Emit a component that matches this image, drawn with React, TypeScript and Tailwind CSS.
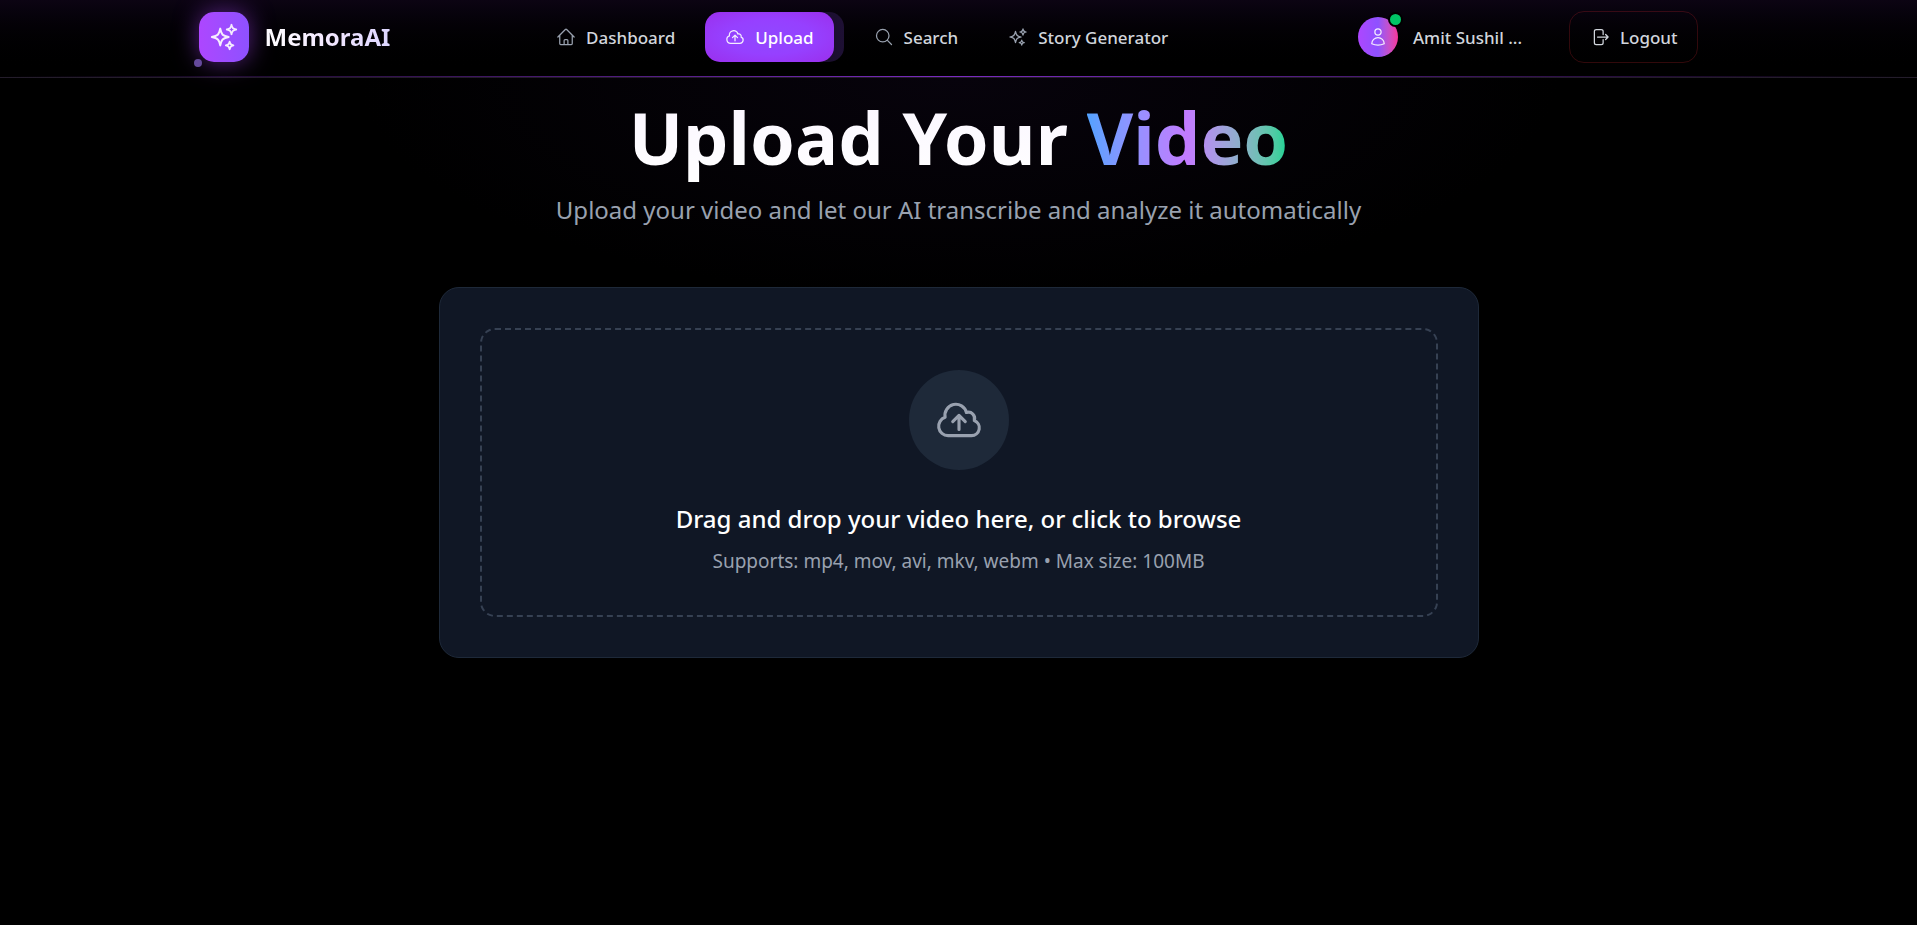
import type { ReactNode } from "react";
import {
  HiOutlineArrowRightOnRectangle,
  HiOutlineCloudArrowUp,
  HiOutlineHome,
  HiOutlineMagnifyingGlass,
  HiOutlineSparkles,
  HiOutlineUser,
} from "react-icons/hi2";

function NavItem({ icon, label }: { icon: ReactNode; label: string }) {
  return (
    <a href="#" className="flex h-[50px] items-center gap-2.5 rounded-[15px] px-5 text-gray-300">
      <span className="text-xl text-gray-400">{icon}</span>
      <span className="pt-0.5">{label}</span>
    </a>
  );
}

function Header() {
  return (
    <header className="relative border-b border-white/10 bg-linear-to-b from-[#0c0413] to-black">
      <div className="mx-auto flex h-[77px] max-w-[1600px] items-center justify-between pr-[60px] pb-[3px] pl-10">
        <a href="#" className="flex items-center gap-4">
          <span className="relative flex size-[50px] items-center justify-center rounded-[15px] bg-linear-to-r from-[#ad46ff] to-[#8e51ff] text-3xl text-white/90 shadow-[0_0_25px_rgba(173,70,255,0.5)]">
            <HiOutlineSparkles />
            <span className="absolute -bottom-[5px] -left-[5px] size-2 rounded-full bg-[#65499c]" />
          </span>
          <span className="bg-linear-to-r from-white via-purple-100 to-violet-200 bg-clip-text text-[24px] font-bold text-transparent">
            MemoraAI
          </span>
        </a>

        <nav className="flex items-center gap-2.5 text-[17px] font-medium">
          <NavItem icon={<HiOutlineHome />} label="Dashboard" />
          <a href="#" aria-current="page" className="flex rounded-[15px] bg-linear-to-r from-transparent to-[#1e1034] pr-2.5 text-white">
            <span className="flex h-[50px] items-center gap-2.5 rounded-[15px] bg-radial from-[#9048ff] via-[#9640ff] to-[#9a2eec] px-5">
              <HiOutlineCloudArrowUp className="text-xl text-white/90" />
              <span className="pt-0.5">Upload</span>
            </span>
          </a>
          <NavItem icon={<HiOutlineMagnifyingGlass />} label="Search" />
          <NavItem icon={<HiOutlineSparkles />} label="Story Generator" />
        </nav>

        <div className="flex items-center gap-[42px] pl-6 text-[17px] font-medium text-gray-300">
          <div className="flex items-center gap-[15px]">
            <span className="relative flex size-10 items-center justify-center rounded-full bg-linear-to-r from-[#ad46ff] via-[#8e51ff] to-[#f6339a] text-xl text-white/90">
              <HiOutlineUser />
              <span className="absolute -top-[5px] -right-[5px] size-[15px] rounded-full border-2 border-black bg-[#00c566]" />
            </span>
            <span className="min-w-[114px] pt-0.5">Amit Sushil ...</span>
          </div>
          <button type="button" className="flex h-[52px] items-center gap-2.5 rounded-[15px] border border-[#fb2c36]/20 px-5">
            <HiOutlineArrowRightOnRectangle className="text-xl" />
            <span className="pt-0.5">Logout</span>
          </button>
        </div>
      </div>
      <div className="absolute inset-x-0 bottom-0 h-px bg-linear-to-r from-transparent via-[#7a2bc0] to-transparent" />
    </header>
  );
}

export default function App() {
  return (
    <div className="min-h-screen bg-black font-['Noto_Sans','Open_Sans',sans-serif] text-white">
      <Header />
      <main className="bg-[radial-gradient(ellipse_600px_220px_at_50%_0,#07030c,#000)] px-10 pt-3 pb-10">
        <div className="mx-auto max-w-[1040px]">
          <div className="text-center">
            <h1 className="text-[72px] leading-[94px] font-bold">
              <span className="bg-linear-to-b from-purple-50 to-white bg-clip-text text-transparent">Upload Your </span>
              <span className="bg-linear-to-r from-[#51a2ff] via-[#c27aff] to-[#00d492] bg-clip-text text-transparent">Video</span>
            </h1>
            <p className="mt-2 text-[24px] leading-[36px] text-gray-400">
              Upload your video and let our AI transcribe and analyze it automatically
            </p>
          </div>

          <section className="mt-[59px] rounded-[20px] border border-[#1e2939] bg-[#101725] p-10">
            <label className="flex cursor-pointer flex-col items-center rounded-[15px] border-2 border-dashed border-[#364153] p-10 text-center">
              <input type="file" accept="video/*" className="sr-only" />
              <span className="flex size-[100px] items-center justify-center rounded-full bg-[#1e2939] text-[50px] text-gray-400">
                <HiOutlineCloudArrowUp />
              </span>
              <span className="mt-8 text-[24px] leading-[34px] font-medium">
                Drag and drop your video here, or click to browse
              </span>
              <span className="mt-3 text-[19px] leading-[27px] text-gray-400">
                Supports: mp4, mov, avi, mkv, webm • Max size: 100MB
              </span>
            </label>
          </section>
        </div>
      </main>
    </div>
  );
}
